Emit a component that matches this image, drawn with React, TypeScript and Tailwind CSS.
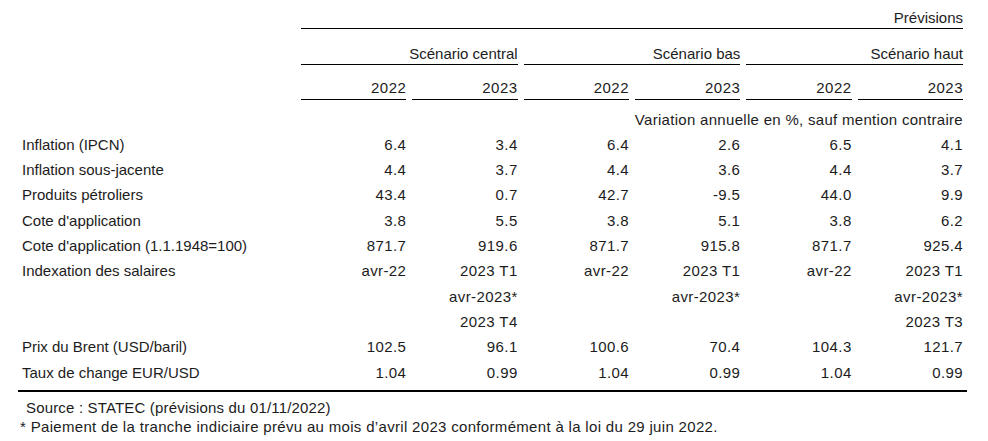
import React from 'react'

type Row = { label: string; values: string[] }

const rows: Row[] = [
  { label: 'Inflation (IPCN)', values: ['6.4', '3.4', '6.4', '2.6', '6.5', '4.1'] },
  { label: 'Inflation sous-jacente', values: ['4.4', '3.7', '4.4', '3.6', '4.4', '3.7'] },
  { label: 'Produits pétroliers', values: ['43.4', '0.7', '42.7', '-9.5', '44.0', '9.9'] },
  { label: "Cote d'application", values: ['3.8', '5.5', '3.8', '5.1', '3.8', '6.2'] },
  { label: "Cote d'application (1.1.1948=100)", values: ['871.7', '919.6', '871.7', '915.8', '871.7', '925.4'] },
  { label: 'Indexation des salaires', values: ['avr-22', '2023 T1', 'avr-22', '2023 T1', 'avr-22', '2023 T1'] },
  { label: '', values: ['', 'avr-2023*', '', 'avr-2023*', '', 'avr-2023*'] },
  { label: '', values: ['', '2023 T4', '', '', '', '2023 T3'] },
  { label: 'Prix du Brent (USD/baril)', values: ['102.5', '96.1', '100.6', '70.4', '104.3', '121.7'] },
  { label: 'Taux de change EUR/USD', values: ['1.04', '0.99', '1.04', '0.99', '1.04', '0.99'] }
]

const scenarios = ['Scénario central', 'Scénario bas', 'Scénario haut']

export default function App() {
  return (
    <div
      className="w-[988px] h-[441px] bg-white text-[#1c1c1c] text-[15px] overflow-hidden"
      style={{ fontFamily: '"Liberation Sans", Arial, sans-serif' }}
    >
      <div className="grid w-[963px] grid-cols-[295px_repeat(6,minmax(0,1fr))]">
        {/* Prévisions */}
        <div />
        <div className="col-span-6 pl-[6px]">
          <div className="h-[29px] flex items-end justify-end pb-[2px] leading-[17px] border-b border-black">
            Prévisions
          </div>
        </div>

        {/* Scénarios */}
        <div />
        {scenarios.map((s) => (
          <div key={s} className="col-span-2 pl-[6px]">
            <div className="h-[36px] flex items-end justify-end pb-[2px] leading-[17px] border-b border-black">
              {s}
            </div>
          </div>
        ))}

        {/* Years */}
        <div />
        {['2022', '2023', '2022', '2023', '2022', '2023'].map((y, i) => (
          <div key={i} className="pl-[6px]">
            <div className="h-[35px] flex items-end justify-end pb-[3px] leading-[17px] border-b border-black tracking-[0.5px]">
              {y}
            </div>
          </div>
        ))}

        {/* Unit */}
        <div />
        <div className="col-span-6 h-[32.5px] pt-[8px] leading-[24px] text-right whitespace-nowrap tracking-[0.3px]">
          Variation annuelle en %, sauf mention contraire
        </div>

        {rows.map((r, i) => (
          <React.Fragment key={i}>
            <div className="h-[25.3px] pl-[22px] flex items-center whitespace-nowrap">{r.label}</div>
            {r.values.map((v, j) => (
              <div key={j} className="h-[25.3px] flex items-center justify-end whitespace-nowrap tracking-[0.4px]">
                {v}
              </div>
            ))}
          </React.Fragment>
        ))}
      </div>

      <div className="ml-[18px] mt-[5px] w-[949px] h-[2px] bg-black" />

      <div className="mt-[7px] pl-[26px] leading-[18px] whitespace-nowrap tracking-[0.17px]">
        Source : STATEC (prévisions du 01/11/2022)
      </div>
      <div className="pl-[20px] leading-[19px] whitespace-nowrap tracking-[0.32px]">
        * Paiement de la tranche indiciaire prévu au mois d’avril 2023 conformément à la loi du 29 juin 2022.
      </div>
    </div>
  )
}
